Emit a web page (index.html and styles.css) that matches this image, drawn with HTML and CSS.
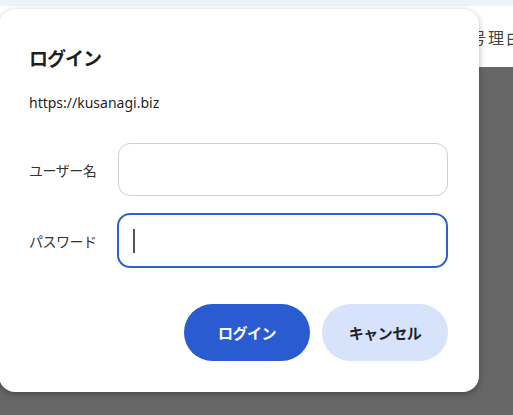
FILE: index.html
```html
<!DOCTYPE html>
<html lang="ja">
<head>
<meta charset="utf-8">
<title>ログイン</title>
<link rel="stylesheet" href="styles.css">
</head>
<body>
<div class="page">
  <div class="topstrip"></div>
  <div class="header"><span class="header-text">号理由</span></div>
  <div class="content"></div>
</div>
<div class="dialog">
  <h1 class="title">ログイン</h1>
  <div class="url">https://kusanagi.biz</div>
  <div class="form">
    <div class="row">
      <label class="label">ユーザー名</label>
      <div class="input"></div>
    </div>
    <div class="row">
      <label class="label">パスワード</label>
      <div class="input focused"><span class="caret"></span></div>
    </div>
  </div>
  <div class="actions">
    <button class="btn primary">ログイン</button>
    <button class="btn secondary">キャンセル</button>
  </div>
</div>
</body>
</html>
```
FILE: styles.css
```css
html, body {
  margin: 0;
  padding: 0;
  width: 513px;
  height: 415px;
  overflow: hidden;
  background: #666666;
  font-family: "Noto Sans", "Noto Sans CJK JP", sans-serif;
}
.page {
  display: flex;
  flex-direction: column;
  height: 415px;
}
.topstrip {
  height: 6px;
  background: #eef2fa;
}
.header {
  height: 61px;
  background: #ffffff;
  display: flex;
  align-items: center;
  padding-left: 470px;
  overflow: hidden;
}
.header-text {
  font-family: "Noto Sans CJK JP", sans-serif;
  font-size: 16px;
  letter-spacing: 2px;
  color: #444;
  white-space: nowrap;
}
.content {
  flex: 1;
  background: #666666;
}
.dialog {
  position: absolute;
  left: -1px;
  top: 9px;
  width: 480px;
  height: 383px;
  box-sizing: border-box;
  background: #ffffff;
  border-radius: 16px;
  box-shadow: 0 2px 6px rgba(0, 0, 0, 0.3);
  padding: 37px 31px 0 30px;
  display: flex;
  flex-direction: column;
}
.title {
  margin: 0;
  font-family: "Noto Sans CJK JP", sans-serif;
  font-size: 19px;
  line-height: 24px;
  font-weight: 700;
  color: #1f1f1f;
  letter-spacing: -1px;
}
.url {
  margin-top: 23px;
  font-size: 14px;
  line-height: 20px;
  color: #1f1f1f;
}
.form {
  margin-top: 30px;
  display: flex;
  flex-direction: column;
  gap: 18px;
}
.row {
  display: flex;
  align-items: center;
}
.label {
  width: 89px;
  font-family: "Noto Sans CJK JP", sans-serif;
  font-size: 14px;
  color: #333;
  letter-spacing: -0.5px;
}
.input {
  width: 330px;
  height: 53px;
  box-sizing: border-box;
  border: 1px solid #cfcfcf;
  border-radius: 12px;
  display: flex;
  align-items: center;
}
.input.focused {
  border: 2px solid #2f5fd6;
  width: 332px;
  height: 55px;
  margin: -1px 0 -1px -1px;
  border-radius: 13px;
  padding-left: 14px;
}
.caret {
  width: 2px;
  height: 24px;
  background: #555;
}
.actions {
  margin-top: 37px;
  display: flex;
  justify-content: flex-end;
  gap: 12px;
}
.btn {
  width: 126px;
  height: 57px;
  border: none;
  border-radius: 29px;
  font-family: "Noto Sans CJK JP", sans-serif;
  font-size: 15px;
  font-weight: 700;
  letter-spacing: -0.5px;
  padding: 0;
}
.primary {
  background: #2b5bd1;
  color: #ffffff;
}
.secondary {
  background: #d6e3fb;
  color: #1f1f2e;
}
```
